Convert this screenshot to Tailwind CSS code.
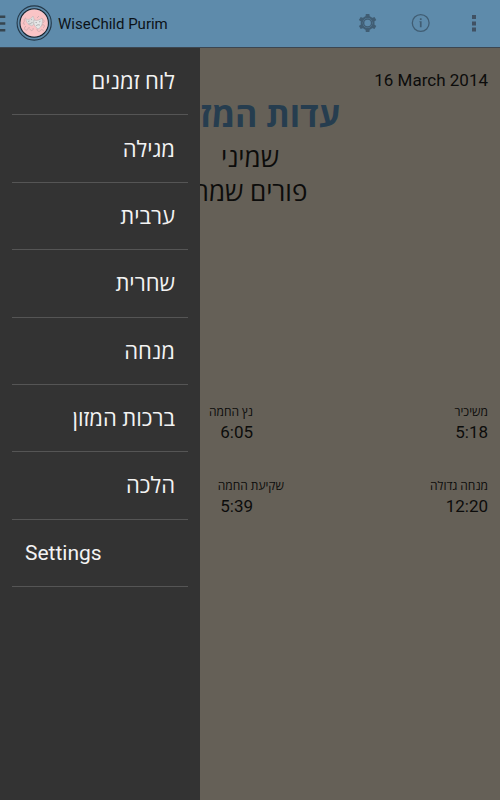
<!DOCTYPE html>
<html lang="he">
<head>
<meta charset="utf-8">
<meta name="viewport" content="width=device-width, initial-scale=1">
<title>WiseChild Purim</title>
<script src="https://cdn.jsdelivr.net/npm/@tailwindcss/browser@4"></script>
</head>
<body class="flex min-h-screen flex-col bg-[#656057] font-[Roboto,'Open_Sans','Noto_Sans',sans-serif] text-[#0c0c0b]">
  <header class="flex h-12 items-center border-b border-[#3c4650] bg-[#5e8bab] pb-px">
    <button type="button" aria-label="Toggle menu" class="flex w-4 items-center">
      <svg class="h-5 w-[6px]" viewBox="0 0 6 20" fill="#36454f" aria-hidden="true"><path d="M0 2.500h5.300v2.500H0zM0 9.200h5.300v2.500H0zM0 16h5.300v2.500H0z"/></svg>
    </button>
    <svg class="size-9 shrink-0" viewBox="0 0 36 36" aria-hidden="true">
      <circle cx="18.200" cy="18" r="17.1" fill="none" stroke="#243949" stroke-width="1.1"/>
      <circle cx="18.200" cy="18" r="14.2" fill="none" stroke="#1b252d" stroke-width="1.2"/>
      <circle cx="18.200" cy="18" r="13.600" fill="#fac4c6"/>
      <g fill="none" stroke="#cfadb0" stroke-width="1">
        <path d="M10 13c-3 1-1 3-2 4s-1 3 1 2M10 21c-3 2-1 5 1 4s0-3 3-2M14 24c1 3 4 1 3-1M21 24c0 3 3 3 4 1s3 2 3 1M26 20c3-1 3 2 1 3M26 14c2 1 3 2 1 4M21 13l2-2"/>
      </g>
      <path d="M10 14c3 1 5 0 7-3 2 4 2 8-1 10-3-1-6-3-6-7z" fill="#dedede" stroke="#bbb0b3" stroke-width=".5"/>
      <path d="M18 15c3 1 6 0 8-2 1 5 0 9-4 11-3-2-5-5-4-9z" fill="#e6e6e6" stroke="#aaa6a8" stroke-width=".5"/>
      <path d="M12 16.500l1.500-.5M15 15l1-.8M12.500 19c1.500 0 3-.5 4-2M19.500 17.500l1.500.2M23 17l1.500-.7M20 21c1-1.500 3-1.500 4-.8" fill="none" stroke="#98999c" stroke-width=".7"/>
    </svg>
    <h1 class="ml-1.5 grow pt-0.5 text-[15px] text-[#0c1217]">WiseChild Purim</h1>
    <nav class="flex items-center" aria-label="Actions">
      <button type="button" aria-label="Preferences" class="grid w-[53px] place-items-center">
        <svg class="size-5" viewBox="0 0 20 20" aria-hidden="true">
          <g fill="#405d73">
            <path d="M7.800 1h3.600l.5 4h-4.600zM7.800 19h3.600l.5-4h-4.600z"/>
            <path d="M7.800 1h3.600l.5 4h-4.600zM7.800 19h3.600l.5-4h-4.600z" transform="rotate(60 9.600 10)"/>
            <path d="M7.800 1h3.600l.5 4h-4.600zM7.800 19h3.600l.5-4h-4.600z" transform="rotate(120 9.600 10)"/>
            <path fill-rule="evenodd" d="M9.600 3a7 7 0 1 0 0 14a7 7 0 1 0 0-14zM9.600 5a5 5 0 1 1 0 10a5 5 0 1 1 0-10z"/>
          </g>
          <circle cx="9.600" cy="10" r="4" fill="none" stroke="#405d73" stroke-width="1.500"/>
        </svg>
      </button>
      <button type="button" aria-label="About" class="grid w-[53px] place-items-center">
        <svg class="size-5" viewBox="0 0 20 20" aria-hidden="true">
          <circle cx="9.700" cy="10" r="8.400" fill="none" stroke="#405d73" stroke-width="1.300"/>
          <path d="M8.900 5.200h1.700v1.700H8.900zM8.400 8.200h2.200v6H8.900V9.200h-.5z" fill="#405d73"/>
        </svg>
      </button>
      <button type="button" aria-label="More options" class="grid w-[53px] place-items-center">
        <svg class="size-5" viewBox="0 0 20 20" fill="#405163" aria-hidden="true"><path d="M8 2h4v4H8zM8 8.500h4v4H8zM8 14.500h4v4H8z"/></svg>
      </button>
    </nav>
  </header>

  <div class="relative grow">
    <main class="px-3 pt-5">
      <p class="text-right text-[17px] leading-6">16 March 2014</p>
      <div dir="rtl" class="text-center">
        <h2 class="mb-[3px] text-[34px] leading-[46px] font-bold text-[#263d4f]">עדות המזרח</h2>
        <p class="text-[26px] leading-[34px]">שמיני</p>
        <p class="text-[26px] leading-[34px]">פורים שמח</p>
      </div>
      <dl dir="rtl" class="mt-[195px] flex flex-col gap-[34px]">
        <div class="flex">
          <div class="w-[235px]"><dt class="text-xs leading-4">משיכיר</dt><dd class="text-[17px] leading-6">5:18</dd></div>
          <div class="grow"><dt class="text-xs leading-4">נץ החמה</dt><dd class="text-[17px] leading-6">6:05</dd></div>
        </div>
        <div class="flex">
          <div class="w-[204px]"><dt class="text-xs leading-4">מנחה גדולה</dt><dd class="text-[17px] leading-6">12:20</dd></div>
          <div class="grow"><dt class="text-xs leading-4">שקיעת החמה</dt><dd class="pr-[31px] text-[17px] leading-6">5:39</dd></div>
        </div>
      </dl>
    </main>

    <nav class="absolute inset-y-0 left-0 w-2/5 bg-[#333] px-3 text-[22px] text-[#f3f3f3]" aria-label="Sections">
      <ul class="grid h-[539px] auto-rows-fr">
        <li class="flex border-b border-[#555]"><a href="#times" dir="rtl" class="flex grow items-center px-[13px] pt-px">לוח זמנים</a></li>
        <li class="flex border-b border-[#555]"><a href="#megillah" dir="rtl" class="flex grow items-center px-[13px] pt-px">מגילה</a></li>
        <li class="flex border-b border-[#555]"><a href="#arvit" dir="rtl" class="flex grow items-center px-[13px] pt-px">ערבית</a></li>
        <li class="flex border-b border-[#555]"><a href="#shacharit" dir="rtl" class="flex grow items-center px-[13px] pt-px">שחרית</a></li>
        <li class="flex border-b border-[#555]"><a href="#mincha" dir="rtl" class="flex grow items-center px-[13px] pt-px">מנחה</a></li>
        <li class="flex border-b border-[#555]"><a href="#birkat" dir="rtl" class="flex grow items-center px-[13px] pt-px">ברכות המזון</a></li>
        <li class="flex border-b border-[#555]"><a href="#halacha" dir="rtl" class="flex grow items-center px-[13px] pt-px">הלכה</a></li>
        <li class="flex border-b border-[#555]"><a href="#settings" lang="en" class="flex grow items-center px-[13px] pt-px text-[21px]">Settings</a></li>
      </ul>
    </nav>
  </div>
</body>
</html>
